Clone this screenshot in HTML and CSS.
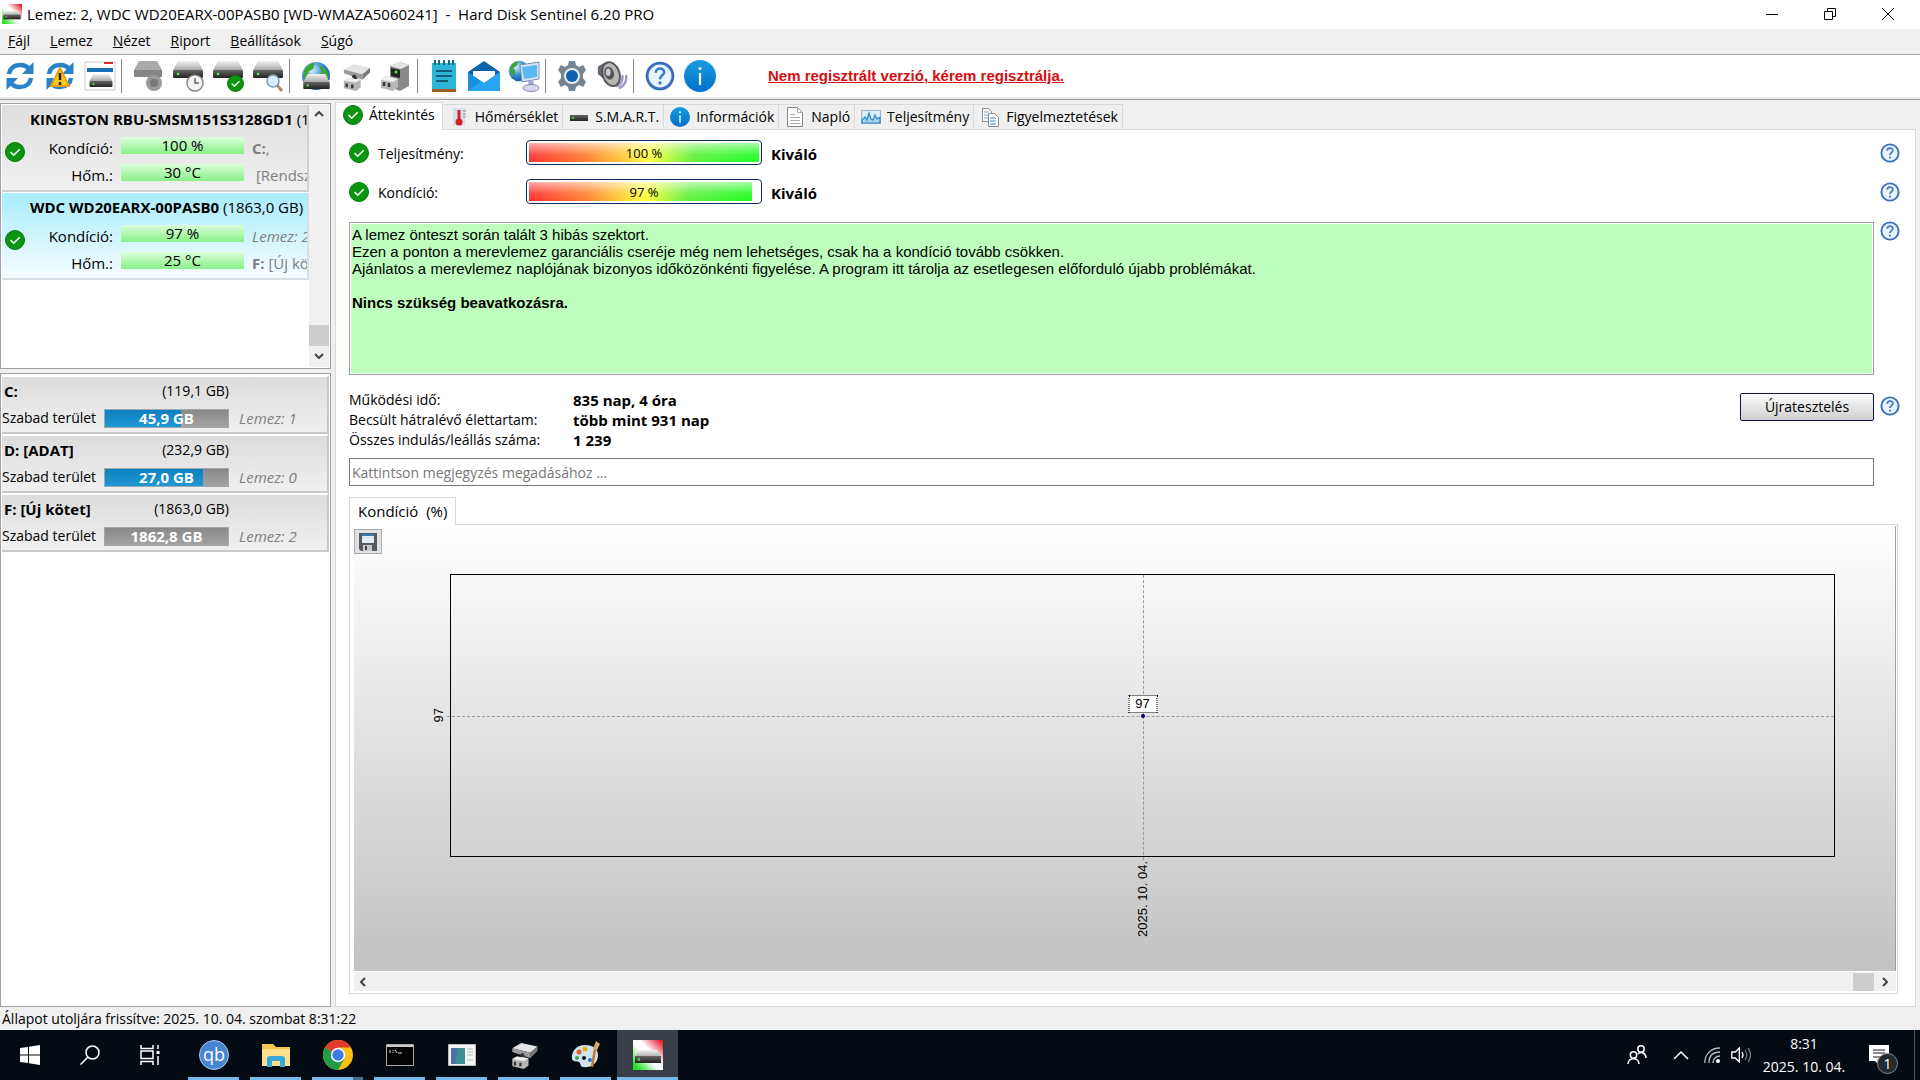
FILE: index.html
```html
<!DOCTYPE html>
<html lang="hu">
<head>
    <meta charset="UTF-8">
    <meta name="viewport" content="width=device-width, initial-scale=1.0">
    <title>Hard Disk Sentinel 6.20 PRO</title>
    <link rel="stylesheet" href="styles.css">
</head>
<body>

    <!-- Shared icons -->
    <svg class="sprite" aria-hidden="true">
        <defs>
            <linearGradient id="metal" x1="0" y1="0" x2="0" y2="1"><stop offset="0" stop-color="#f2f2f2"/><stop offset="1" stop-color="#a8a8a8"/></linearGradient>
            <linearGradient id="dark" x1="0" y1="0" x2="0" y2="1"><stop offset="0" stop-color="#666"/><stop offset="1" stop-color="#222"/></linearGradient>
            <linearGradient id="blue" x1="0" y1="0" x2="0" y2="1"><stop offset="0" stop-color="#189ce0"/><stop offset="1" stop-color="#0070c8"/></linearGradient>
            <linearGradient id="flag" x1="0" y1="1" x2="1" y2="0"><stop offset="0.1" stop-color="#28e028"/><stop offset="0.45" stop-color="#fff"/><stop offset="0.6" stop-color="#fff"/><stop offset="0.95" stop-color="#e82030"/></linearGradient>
            <radialGradient id="globe" cx="0.35" cy="0.3" r="0.8"><stop offset="0" stop-color="#d8f0ff"/><stop offset="0.5" stop-color="#3a8fd8"/><stop offset="1" stop-color="#0c4a98"/></radialGradient>
        </defs>
        <symbol id="i-check" viewBox="0 0 20 20">
            <circle cx="10" cy="10" r="9.5" fill="#0a9410" stroke="#087a0c"/>
            <path d="M5.5 10l3.2 3.2 6-6" fill="none" stroke="#fff" stroke-width="1.6"/>
        </symbol>
        <symbol id="i-help" viewBox="0 0 20 20">
            <circle cx="10" cy="10" r="8.6" fill="#e8f4ff" stroke="#3c6eb8" stroke-width="1.9"/>
            <path d="M7.2 7.8c0-3.6 5.6-3.6 5.6-.3 0 2.2-2.8 2.2-2.8 4.6" fill="none" stroke="#3c78c8" stroke-width="1.7"/>
            <circle cx="10" cy="14.6" r="1.1" fill="#3c78c8"/>
        </symbol>
        <symbol id="i-info" viewBox="0 0 32 32">
            <circle cx="16" cy="16" r="16" fill="url(#blue)"/>
            <path d="M16 13v12" stroke="#fff" stroke-width="2.2"/><circle cx="16" cy="8.5" r="1.6" fill="#fff"/>
        </symbol>
        <symbol id="i-drive" viewBox="0 0 30 17">
            <path d="M5 0h20l5 9H0z" fill="url(#metal)"/>
            <rect y="9" width="30" height="8" rx="1" fill="url(#dark)"/>
            <circle cx="5" cy="13" r="1.3" fill="#4df04d"/>
        </symbol>
        <symbol id="i-refresh" viewBox="0 0 30 30">
            <path d="M4 13C5 7 9 4 15 4c4 0 7 1 9 4M26 17c-1 6-5 9-11 9-4 0-7-1-9-4" fill="none" stroke="#2a82c8" stroke-width="4.5"/>
            <path d="M28.5 1v12H17zM1.5 29V17H13z" fill="#2a82c8"/>
        </symbol>
        <symbol id="i-logo" viewBox="0 0 30 30">
            <path d="M0 0h30v30H0z" fill="url(#flag)"/>
            <path d="M6 10h18l4 7H2z" fill="url(#metal)"/>
            <path d="M2 16h26v7H2z" fill="url(#dark)"/><circle cx="6" cy="19.5" r="1.2" fill="#4df04d"/>
        </symbol>
        <symbol id="i-box" viewBox="0 0 30 30">
            <path d="M2 7l10-6 18 4-8 7z" fill="#e4e4e4"/><path d="M2 7l20 5v6L2 11z" fill="#9a9a9a"/><path d="M22 12l8-7v5l-8 8z" fill="#777"/>
            <path d="M12 13l3 5" stroke="#333" stroke-width="4"/>
            <path d="M2 19l5-3 13 2v8l-5 4-13-3z" fill="#b4b4b4"/><path d="M2 19l5-3 13 2-5 3z" fill="#eee"/>
            <path d="M5 22v4M11 23v4" stroke="#333" stroke-width="2.5"/>
        </symbol>
        <symbol id="i-world" viewBox="0 0 30 30">
            <circle cx="15" cy="15" r="14" fill="url(#globe)"/>
            <path d="M5 6c4-4 7-4 9-4l-2 6-5 3 3 4-2 7C2 18 1 12 5 6zM18 4l7 4 3 7-3 6-6-5 1-6z" fill="#3aa63a"/>
        </symbol>
        <symbol id="i-speaker" viewBox="0 0 34 32">
            <path d="M24 29c6-2 9-8 8-14M21 27c5-2 8-6 7-12" fill="none" stroke="#9a9ac4" stroke-width="2.5"/>
            <path d="M2 6l7-4 6 3v12l-7 2-6-5z" fill="#686474"/>
            <ellipse cx="16" cy="14" rx="10" ry="14" fill="#555" transform="rotate(-18 16 14)"/>
            <ellipse cx="16" cy="14" rx="8" ry="12" fill="#b8b8b8" transform="rotate(-18 16 14)"/>
            <ellipse cx="14" cy="13" rx="5" ry="7" fill="#555" transform="rotate(-18 14 13)"/><ellipse cx="13" cy="12" rx="2.500" ry="4" fill="#c8c8d8"/>
        </symbol>
    </svg>

    <header class="titlebar">
        <svg class="titlebar-logo"><use href="#i-logo"/></svg>
        <h1 class="titlebar-text">Lemez: 2, WDC WD20EARX-00PASB0 [WD-WMAZA5060241] &nbsp;-&nbsp; Hard Disk Sentinel 6.20 PRO</h1>
        <div class="window-buttons">
            <button type="button" aria-label="Kis méret"><svg viewBox="0 0 12 12"><path d="M0 6.500h12"/></svg></button>
            <button type="button" aria-label="Előző méret"><svg viewBox="0 0 12 12"><path d="M.5 3.500h8v8h-8zM3.500 3V.5h8v8H9"/></svg></button>
            <button type="button" aria-label="Bezárás"><svg viewBox="0 0 12 12"><path d="M0 0l12 12M12 0L0 12"/></svg></button>
        </div>
    </header>

    <nav class="menubar">
        <button type="button"><u>F</u>ájl</button>
        <button type="button"><u>L</u>emez</button>
        <button type="button"><u>N</u>ézet</button>
        <button type="button"><u>R</u>iport</button>
        <button type="button"><u>B</u>eállítások</button>
        <button type="button"><u>S</u>úgó</button>
    </nav>

    <div class="toolbar">
        <div class="tool-group">
            <button type="button" aria-label="Frissítés"><svg viewBox="0 0 32 32"><use href="#i-refresh" x="1" y="1" width="30" height="30"/></svg></button>
            <button type="button" aria-label="Problémák frissítése"><svg viewBox="0 0 32 32"><use href="#i-refresh" x="1" y="1" width="30" height="30"/><path d="M16 8l9 18H7z" fill="#fdc820" stroke="#e8a010" stroke-linejoin="round" stroke-width="2"/><path d="M16 13v7M16 22v3" stroke="#222" stroke-width="2.500"/></svg></button>
            <button type="button" aria-label="Lemezek"><svg viewBox="0 0 32 32"><path d="M1 2h30v28H1z" fill="#fff" stroke="#ccc"/><path d="M3 10h26" stroke="#1670b8" stroke-width="4"/><path d="M20 3h9" stroke="#d03030" stroke-width="2"/><use href="#i-drive" x="5" y="14" width="24" height="13"/></svg></button>
        </div>
        <div class="tool-group">
            <button type="button" disabled aria-label="Zajszint"><svg viewBox="0 0 32 32"><path d="M7 1h18l5 9H2z" fill="#aaa"/><path d="M2 10h28v7H2z" fill="#858585"/><circle cx="22" cy="23" r="8" fill="#999"/><circle cx="22" cy="23" r="4" fill="#777"/></svg></button>
            <button type="button" aria-label="Ütemezés"><svg viewBox="0 0 32 32"><use href="#i-drive" x="1" y="1" width="30" height="17"/><circle cx="23" cy="23" r="8" fill="#f4f4f4" stroke="#888" stroke-width="1.500"/><path d="M23 18v5h4" fill="none" stroke="#666" stroke-width="1.500"/></svg></button>
            <button type="button" aria-label="Rövid teszt"><svg viewBox="0 0 32 32"><use href="#i-drive" x="1" y="1" width="30" height="17"/><use href="#i-check" x="15" y="15" width="17" height="17"/></svg></button>
            <button type="button" aria-label="Felülettesztelés"><svg viewBox="0 0 32 32"><use href="#i-drive" x="1" y="1" width="30" height="17"/><path d="M25 25l5 6" stroke="#b09060" stroke-width="3"/><circle cx="21" cy="21" r="6" fill="#dceefc" stroke="#8098b8" stroke-width="1.500"/></svg></button>
        </div>
        <div class="tool-group">
            <button type="button" aria-label="Hálózati lemez"><svg viewBox="0 0 32 32"><use href="#i-world" x="1" y="1" width="30" height="30"/><use href="#i-drive" x="3" y="14" width="27" height="15"/></svg></button>
            <button type="button" aria-label="Lemez leválasztása"><svg viewBox="0 0 32 32"><use href="#i-box" x="1" y="3" width="30" height="28"/></svg></button>
            <button type="button" aria-label="Lemez csatlakoztatása"><svg viewBox="0 0 32 32"><path d="M10 6l10-4 9 3v21l-9 5-10-4z" fill="#8a8a8a"/><path d="M10 6l10-4 9 3-8 4z" fill="#e4e4e4"/><path d="M11 8l9 2v8l-9-2z" fill="#222"/><circle cx="16" cy="12" r="1.500" fill="#4df04d"/><path d="M1 20l5-4 12 3v8l-5 4-12-3z" fill="#b8b8b8"/><path d="M1 20l5-4 12 3-5 3z" fill="#eee"/><path d="M4 22v4M9 23v4" stroke="#333" stroke-width="2.500"/></svg></button>
        </div>
        <div class="tool-group">
            <button type="button" aria-label="Riport"><svg viewBox="0 0 32 32"><path d="M4 3h24v26H4z" fill="#2eb4d8"/><path d="M4 29h24v3H4z" fill="#a05c28"/><path d="M7 0v5M11 0v5M16 0v5M21 0v5M25 0v5" stroke="#176a88" stroke-width="2"/><path d="M8 11h16M8 16h16M8 21h12" stroke="#14607c" stroke-width="1.800"/></svg></button>
            <button type="button" aria-label="Riport küldése"><svg viewBox="0 0 32 32"><path d="M0 12L16 1l16 11v19H0z" fill="#0a62a8"/><path d="M5 11h22v12H5z" fill="#fff"/><path d="M0 12l16 11 16-11v19H0z" fill="#1a90e0"/><path d="M0 31l13-10 3 2 16-11v19z" fill="#28a4f0"/></svg></button>
            <button type="button" aria-label="Hálózat"><svg viewBox="0 0 32 32"><use href="#i-world" x="0" y="0" width="22" height="22"/><path d="M12 5l19-3v17l-17 3z" fill="#d8e4f4" stroke="#7890b8"/><path d="M14 7l15-2v12l-13 2z" fill="#58b8f4"/><path d="M20 21l5-1 1 6h-5z" fill="#a8a8d0"/><ellipse cx="23" cy="28" rx="8" ry="3.500" fill="#d8d8ec" stroke="#8888b0"/></svg></button>
        </div>
        <div class="tool-group">
            <button type="button" aria-label="Beállítások"><svg viewBox="0 0 32 32"><path d="M13 1h6l1 4 3 2 4-2 3 5-3 4v4l3 4-3 5-4-2-3 2-1 4h-6l-1-4-3-2-4 2-3-5 3-4v-4l-3-4 3-5 4 2 3-2z" fill="#748490"/><circle cx="16" cy="16" r="8" fill="#e8eef4"/><circle cx="16" cy="16" r="6" fill="#0c62b0"/></svg></button>
            <button type="button" aria-label="Hangok"><svg><use href="#i-speaker"/></svg></button>
        </div>
        <div class="tool-group">
            <button type="button" aria-label="Súgó"><svg viewBox="0 0 32 32"><use href="#i-help" x="1" y="1" width="30" height="30"/></svg></button>
            <button type="button" aria-label="Névjegy"><svg><use href="#i-info"/></svg></button>
        </div>
        <a class="register-link" href="#register">Nem regisztrált verzió, kérem regisztrálja.</a>
    </div>

    <div class="workspace">
        <aside class="sidebar">
            <section class="panel disks">
                <ul class="disk-list">
                    <li class="disk">
                        <h2 class="disk-name"><b>KINGSTON RBU-SMSM151S3128GD1</b> (119,1 GB)</h2>
                        <svg class="status-icon"><use href="#i-check"/></svg>
                        <span class="disk-label">Kondíció:</span>
                        <span class="disk-bar">100 %</span>
                        <span class="disk-extra"><b>C:</b>,</span>
                        <span class="disk-label">Hőm.:</span>
                        <span class="disk-bar">30 °C</span>
                        <span class="disk-extra">&nbsp;[Rendszer]</span>
                    </li>
                    <li class="disk selected">
                        <h2 class="disk-name"><b>WDC WD20EARX-00PASB0</b> (1863,0 GB)</h2>
                        <svg class="status-icon"><use href="#i-check"/></svg>
                        <span class="disk-label">Kondíció:</span>
                        <span class="disk-bar">97 %</span>
                        <span class="disk-extra"><i>Lemez: 2</i></span>
                        <span class="disk-label">Hőm.:</span>
                        <span class="disk-bar">25 °C</span>
                        <span class="disk-extra"><b>F:</b> [Új kötet]</span>
                    </li>
                </ul>
                <div class="scroll-v">
                    <svg viewBox="0 0 10 6"><path d="M1 5l4-4 4 4"/></svg>
                    <span class="thumb"></span>
                    <svg viewBox="0 0 10 6"><path d="M1 1l4 4 4-4"/></svg>
                </div>
            </section>

            <section class="panel volumes">
                <ul>
                    <li class="volume">
                        <b class="volume-name">C:</b>
                        <span class="volume-size">(119,1 GB)</span>
                        <span class="volume-label">Szabad terület</span>
                        <span class="volume-bar"><span class="volume-used" style="width: 62%"></span><b>45,9 GB</b></span>
                        <i>Lemez: 1</i>
                    </li>
                    <li class="volume">
                        <b class="volume-name">D: [ADAT]</b>
                        <span class="volume-size">(232,9 GB)</span>
                        <span class="volume-label">Szabad terület</span>
                        <span class="volume-bar"><span class="volume-used" style="width: 80%"></span><b>27,0 GB</b></span>
                        <i>Lemez: 0</i>
                    </li>
                    <li class="volume">
                        <b class="volume-name">F: [Új kötet]</b>
                        <span class="volume-size">(1863,0 GB)</span>
                        <span class="volume-label">Szabad terület</span>
                        <span class="volume-bar"><span class="volume-used" style="width: 0%"></span><b>1862,8 GB</b></span>
                        <i>Lemez: 2</i>
                    </li>
                </ul>
            </section>
        </aside>

        <main class="content">
            <div class="tabs" role="tablist">
                <button type="button" role="tab" class="tab active" aria-selected="true"><svg><use href="#i-check"/></svg>Áttekintés</button>
                <button type="button" role="tab" class="tab"><svg viewBox="0 0 20 20"><path d="M4 1h12v18H4z" fill="#d4e0f0"/><path d="M14 4h3M14 7h3M14 10h3" stroke="#889"/><path d="M10 3v12" stroke="#d42020" stroke-width="3"/><circle cx="10" cy="15" r="3.500" fill="#d42020"/></svg>Hőmérséklet</button>
                <button type="button" role="tab" class="tab"><svg viewBox="0 0 20 20"><path d="M1 8h18v6H1z" fill="url(#dark)"/><circle cx="4" cy="11" r="1" fill="#4df04d"/></svg>S.M.A.R.T.</button>
                <button type="button" role="tab" class="tab"><svg><use href="#i-info"/></svg>Információk</button>
                <button type="button" role="tab" class="tab"><svg viewBox="0 0 20 20"><path d="M2.500 .5h10l5 5v14h-15z" fill="#fff" stroke="#888"/><path d="M12.500 .5v5h5M5 7.500h5M5 10.500h10M5 13.500h10M5 16.500h10" fill="none" stroke="#aaa"/></svg>Napló</button>
                <button type="button" role="tab" class="tab"><svg viewBox="0 0 20 20"><path d="M.5 3.500h19v13H.5z" fill="#dceefa" stroke="#a0b4c8"/><path d="M1 13l3-3 2 3 2-7 2 6 2 1 2-5 2 4 3-2v6H1z" fill="#a8d4f4" stroke="#2a88c8" stroke-width="1.200"/></svg>Teljesítmény</button>
                <button type="button" role="tab" class="tab"><svg viewBox="0 0 20 20"><path d="M2.500 1.500h6l3 3v10h-9z" fill="#fff" stroke="#888"/><path d="M4 5h5M4 8h5M4 11h5" stroke="#68a0cc"/><path d="M8.500 6.500h6l4 4v9h-10z" fill="#fff" stroke="#888"/><path d="M10 11h6M10 14h6M10 17h6" stroke="#3890d0"/></svg>Figyelmeztetések</button>
            </div>

            <div class="tab-page">
                <div class="overview">
                    <div class="meter-row">
                        <svg class="status-icon"><use href="#i-check"/></svg>
                        <span class="meter-label">Teljesítmény:</span>
                        <div class="meter"><span class="meter-fill" style="width: 100%"></span><span class="meter-text">100 %</span></div>
                        <b>Kiváló</b>
                    </div>
                    <button type="button" class="help" aria-label="Súgó: teljesítmény"><svg><use href="#i-help"/></svg></button>

                    <div class="meter-row">
                        <svg class="status-icon"><use href="#i-check"/></svg>
                        <span class="meter-label">Kondíció:</span>
                        <div class="meter"><span class="meter-fill" style="width: 97%"></span><span class="meter-text">97 %</span></div>
                        <b>Kiváló</b>
                    </div>
                    <button type="button" class="help" aria-label="Súgó: kondíció"><svg><use href="#i-help"/></svg></button>

                    <div class="health-text">
                        <p>A lemez önteszt során talált 3 hibás szektort.</p>
                        <p>Ezen a ponton a merevlemez garanciális cseréje még nem lehetséges, csak ha a kondíció tovább csökken.</p>
                        <p>Ajánlatos a merevlemez naplójának bizonyos időközönkénti figyelése. A program itt tárolja az esetlegesen előforduló újabb problémákat.</p>
                        <p class="verdict">Nincs szükség beavatkozásra.</p>
                    </div>
                    <button type="button" class="help" aria-label="Súgó: szöveges leírás"><svg><use href="#i-help"/></svg></button>

                    <div class="facts-row">
                        <dl class="facts">
                            <dt>Működési idő:</dt><dd>835 nap, 4 óra</dd>
                            <dt>Becsült hátralévő élettartam:</dt><dd>több mint 931 nap</dd>
                            <dt>Összes indulás/leállás száma:</dt><dd>1 239</dd>
                        </dl>
                        <button type="button" class="retest">Újratesztelés</button>
                    </div>
                    <button type="button" class="help" aria-label="Súgó: újratesztelés"><svg><use href="#i-help"/></svg></button>

                    <input class="comment" type="text" aria-label="Megjegyzés" placeholder="Kattintson megjegyzés megadásához ...">
                </div>

                <div class="chart-tabs" role="tablist">
                    <button type="button" role="tab" class="chart-tab" aria-selected="true">Kondíció &nbsp;(%)</button>
                </div>
                <section class="chart-page">
                    <div class="chart">
                        <button type="button" class="save" aria-label="Mentés"><svg viewBox="0 0 18 18"><path d="M0 0h18v18H2l-2-2z" fill="#555b62"/><path d="M3 1h12v9H3z" fill="#dfe8ee"/><path d="M3 1h12v2H3z" fill="#3c7cb4"/><path d="M4 12h9v6H4z" fill="#c8c8c8"/><path d="M6 13h2v4H6z" fill="#444"/></svg></button>
                        <span class="axis-y">97</span>
                        <div class="plot">
                            <span class="point"></span>
                            <span class="point-label">97</span>
                        </div>
                        <span class="axis-x">2025. 10. 04.</span>
                    </div>
                    <div class="scroll-h">
                        <svg viewBox="0 0 6 10"><path d="M5 1L1 5l4 4"/></svg>
                        <span class="thumb"></span>
                        <svg viewBox="0 0 6 10"><path d="M1 1l4 4-4 4"/></svg>
                    </div>
                </section>
            </div>
        </main>
    </div>

    <footer class="statusbar">Állapot utoljára frissítve: 2025. 10. 04. szombat 8:31:22</footer>

    <div class="taskbar">
        <div class="task-system">
            <button type="button" aria-label="Start"><svg viewBox="0 0 20 20"><path d="M0 3l8-1v7.500H0zM9 1.800L20 0v9.500H9zM0 10.500h8V18l-8-1zM9 10.500h11V20L9 18.200z" fill="#fff"/></svg></button>
            <button type="button" aria-label="Keresés"><svg viewBox="0 0 20 20"><circle cx="12.500" cy="7.500" r="6.500" fill="none" stroke="#fff" stroke-width="1.500"/><path d="M8 12l-7.500 7.500" stroke="#fff" stroke-width="1.500"/></svg></button>
            <button type="button" aria-label="Feladatnézet"><svg viewBox="0 0 20 20"><path d="M1 0v3.500h12V0M1 20v-3.500h12V20M1 6h12v7.500H1zM18 0v4M18 11v9" fill="none" stroke="#fff" stroke-width="1.500"/><path d="M16.500 6h3v3h-3z" fill="#fff"/></svg></button>
        </div>
        <div class="task-apps">
            <button type="button" class="app" aria-label="qBittorrent"><svg viewBox="0 0 30 30"><circle cx="15" cy="15" r="14.500" fill="#4684d4" stroke="#a8ccf4"/><text class="qb" x="15" y="21" text-anchor="middle">qb</text></svg></button>
            <button type="button" class="app" aria-label="Fájlkezelő"><svg viewBox="0 0 30 30"><path d="M1 4h11l3 3h14v19H1z" fill="#f4c64c"/><path d="M1 9h28v17H1z" fill="#fde08a"/><path d="M6 27v-8q0-3 3-3h12q3 0 3 3v8h-5v-6h-8v6z" fill="#38a8d8"/></svg></button>
            <button type="button" class="app multi" aria-label="Chrome"><svg viewBox="0 0 30 30"><circle cx="15" cy="15" r="15" fill="#fbc116"/><path d="M15 15L2 7.500A15 15 0 0 1 28 7.500H15z" fill="#e33b2e"/><path d="M2 7.500A15 15 0 0 0 15 30l6.500-11.300L15 15z" fill="#229a48"/><circle cx="15" cy="15" r="7.200" fill="#fff"/><circle cx="15" cy="15" r="5.700" fill="#3b7de8"/></svg></button>
            <button type="button" class="app" aria-label="Parancssor"><svg viewBox="0 0 30 30"><path d="M1.500 4.500h27v21h-27z" fill="#050505" stroke="#aaa"/><path d="M2 5h26v2H2z" fill="#ccc"/><path d="M5 10v3M8 10v1M8 12v1M10 10l2 3M13 13h4" stroke="#ddd" fill="none"/></svg></button>
            <button type="button" class="app" aria-label="Alkalmazás"><svg viewBox="0 0 30 30"><path d="M1.500 4.500h27v21h-27z" fill="#f4f4f4" stroke="#bbb"/><path d="M4 8h14v16H4z" fill="#3c8f90"/><path d="M4 8h7L8 24H4z" fill="#4c70a8"/><path d="M20 9h6M20 12h6M20 15h6M20 20h6" stroke="#b0b8c0"/></svg></button>
            <button type="button" class="app" aria-label="Lemezeszköz"><svg viewBox="0 0 30 30"><use href="#i-box" x="1" y="2" width="28" height="27"/></svg></button>
            <button type="button" class="app" aria-label="Paint"><svg viewBox="0 0 30 30"><path d="M14 5c8 0 13 4 13 10 0 8-6 13-15 12-3 0-2-4-4-5s-6 0-7-3C0 11 6 5 14 5z" fill="#cfe4f0"/><circle cx="8" cy="12" r="2.500" fill="#e06030"/><circle cx="14" cy="9" r="2.500" fill="#e8b020"/><circle cx="6" cy="18" r="2" fill="#40a840"/><circle cx="13" cy="18" r="2" fill="#101820"/><circle cx="19" cy="20" r="2" fill="#3070d0"/><path d="M21 27l3-18" stroke="#c87828" stroke-width="2.500"/><path d="M22 9l3-8 4 3-3 6z" fill="#d8a868"/></svg></button>
            <button type="button" class="app active" aria-label="Hard Disk Sentinel"><svg><use href="#i-logo"/></svg></button>
        </div>
        <div class="tray">
            <svg class="tray-people" viewBox="0 0 20 20"><g fill="none" stroke="#fff" stroke-width="1.500"><circle cx="6.500" cy="10" r="3.200"/><circle cx="14" cy="4" r="3.200"/><path d="M1 19c0-7 11-7 11 0M11 9c3-3 8-1 8 4"/></g></svg>
            <svg class="tray-up" viewBox="0 0 16 16"><path d="M1 12l7-7 7 7" fill="none" stroke="#fff" stroke-width="1.500"/></svg>
            <svg class="tray-wifi" viewBox="0 0 16 16"><path d="M.8 16C.8 7 7 1 16 1M5 16C5 9 9 5 16 5M9 16c0-4 3-7 7-7" fill="none" stroke="#b8bcc0" stroke-width="1.300"/><circle cx="14" cy="14" r="2" fill="#fff"/></svg>
            <svg class="tray-sound" viewBox="0 0 20 16"><path d="M.8 5h3.500l4-4v14l-4-4H.8z" fill="none" stroke="#fff" stroke-width="1.300"/><path d="M11 5q2 3 0 6" fill="none" stroke="#fff" stroke-width="1.300"/><path d="M14 3q3.500 5 0 10M17 1q5 7 0 14" fill="none" stroke="#777" stroke-width="1.300"/></svg>
            <div class="clock"><time datetime="08:31">8:31</time><time datetime="2025-10-04">2025. 10. 04.</time></div>
            <button type="button" class="notify" aria-label="Értesítések"><svg viewBox="0 0 20 20"><path d="M0 0h20v16h-6l-4 4-4-4H0z" fill="#fff"/><path d="M4 5h12M4 8h12M4 12h8" stroke="#101820"/></svg><span class="badge">1</span></button>
        </div>
    </div>

</body>
</html>
```
FILE: styles.css
```css
/* General Page Styling */
* {
    box-sizing: border-box;
}

body {
    margin: 0;
    min-height: 100vh;
    display: flex;
    flex-direction: column;
    background: #f0f0f0;
    font: 14px/20px "Open Sans", "Noto Sans", sans-serif;
    color: #000;
}

h1, h2, p, ul, dl, dd {
    margin: 0;
    padding: 0;
    font-size: inherit;
    font-weight: normal;
    list-style: none;
}

button {
    padding: 0;
    border: 0;
    background: none;
    color: inherit;
    font: inherit;
}

svg { display: block; }

.sprite {
    position: absolute;
    width: 0;
    height: 0;
}

/* Title bar */
.titlebar {
    display: flex;
    align-items: center;
    height: 29px;
    padding: 0 3px 2px 2px;
    background: #fff;
}

.titlebar-logo { width: 20px; height: 20px; }

.titlebar-text { margin-left: 5px; font-size: 15px; }

.window-buttons {
    display: flex;
    margin-left: auto;
}

.window-buttons button {
    display: grid;
    place-items: center;
    width: 58px;
    height: 27px;
}

.window-buttons svg {
    width: 12px;
    height: 12px;
    fill: none;
    stroke: #000;
}

/* Menu */
.menubar {
    display: flex;
    gap: 20px;
    height: 25px;
    padding: 0 0 2px 8px;
}

/* Toolbar */
.toolbar {
    display: flex;
    align-items: center;
    height: 46px;
    padding-bottom: 2px;
    border-top: 1px solid #a0a0a0;
    border-bottom: 1px solid #a0a0a0;
    background: #fff;
    box-shadow: inset 0 -2px #e8e8e8;
}

.tool-group {
    display: flex;
    gap: 8px;
    align-items: center;
    height: 34px;
    padding: 0 5px 0 10px;
    border-right: 1px solid #888;
}

.tool-group:first-child { padding-left: 4px; }

.tool-group:nth-last-child(2) { border: 0; }

.tool-group svg { width: 32px; height: 32px; }

.register-link {
    margin-left: 47px;
    color: #d80c10;
    font: bold 15px/20px "Liberation Sans", Arial, sans-serif;
}

/* Workspace */
.workspace {
    display: flex;
    flex: 1;
    gap: 4px;
    padding: 2px 4px 0 0;
}

.sidebar {
    display: flex;
    flex-direction: column;
    gap: 4px;
    width: 331px;
    padding-top: 1px;
}

.panel {
    border: 1px solid #a0a0a0;
    background: #fff;
    padding: 1px;
}

.disks {
    display: flex;
    height: 266px;
    font-size: 15px;
}

.disk-list {
    flex: 1;
    min-width: 0;
    overflow: hidden;
}

.disk {
    display: grid;
    grid-template-columns: 20px 80px 123px 1fr;
    grid-template-rows: 28px 29px 25px;
    column-gap: 8px;
    align-items: center;
    height: 87px;
    padding-left: 3px;
    border: solid #d0d0d0;
    border-width: 0 2px 2px 0;
    margin-bottom: 1px;
    background: linear-gradient(#dedede, #f0f0f0);
    white-space: nowrap;
    overflow: hidden;
}

.disk.selected {
    border-color: #d8dfe4;
    background: linear-gradient(#a8ecfc, #f6fdff);
}

.disk-name {
    grid-column: 1 / -1;
    padding-left: 25px;
}

.status-icon { width: 20px; height: 20px; }

.disk .status-icon {
    grid-row: 2 / 4;
    grid-column: 1;
    margin-bottom: 16px;
}

.disk-label {
    grid-column: 2;
    text-align: right;
}

.disk-bar {
    height: 17px;
    margin-bottom: 4px;
    background: linear-gradient(#dcffdc, #88f088);
    line-height: 17px;
    text-align: center;
}

.disk-extra { color: #808080; }

.scroll-v {
    display: flex;
    flex-direction: column;
    align-items: center;
    width: 20px;
    padding: 6px 0 8px;
    background: #f0f0f0;
}

.scroll-v svg, .scroll-h svg {
    fill: none;
    stroke: #444;
    stroke-width: 2;
}

.scroll-v svg { width: 10px; height: 6px; }

.scroll-v .thumb {
    width: 20px;
    height: 21px;
    margin: auto 0 7px;
    background: #cdcdcd;
}

.volumes { flex: 1; }

.volume {
    display: grid;
    grid-template-columns: 102px 125px 1fr;
    grid-template-rows: 27px 28px;
    align-items: center;
    height: 59px;
    border: solid #c8c8c8;
    border-width: 0 2px 2px 0;
    border-top: 2px solid #fff;
    background: linear-gradient(#dcdcdc, #f0f0f0);
    white-space: nowrap;
}

.volume-name {
    padding-left: 2px;
    font-size: 15px;
}

.volume-size {
    grid-column: 2;
    text-align: right;
}

.volume-label { grid-area: 2 / 1; }

.volume-bar {
    grid-area: 2 / 2;
    position: relative;
    height: 19px;
    background: linear-gradient(#888, #a4a4a4);
    border: 1px solid #a0a8ac;
    color: #fff;
    font-size: 15px;
    line-height: 17px;
    text-align: center;
}

/* Used part lies under the caption */
.volume-used {
    position: absolute;
    inset: 0 auto 0 0;
    background: linear-gradient(#0c80c0, #2098d4);
}

.volume-bar b { position: relative; }

.volume i {
    grid-area: 2 / 3;
    padding-left: 10px;
    color: #808080;
    font-size: 15px;
}

/* Tabs */
.content {
    flex: 1;
    min-width: 0;
    display: flex;
    flex-direction: column;
}

.tabs {
    display: flex;
    align-items: flex-end;
}

.tab {
    display: flex;
    align-items: center;
    gap: 6px;
    height: 25px;
    padding: 0 4px 0 6px;
    border: 1px solid #d9d9d9;
    border-width: 1px 1px 0 0;
    white-space: nowrap;
}

.tab svg { width: 20px; height: 20px; }

.tab.active {
    height: 28px;
    margin-bottom: -1px;
    padding: 0 7px 3px;
    border-left-width: 1px;
    background: #fff;
    z-index: 1;
}

.tab-page {
    display: flex;
    flex-direction: column;
    flex: 1;
    padding: 9px 15px 12px 13px;
    border: 1px solid #d9d9d9;
    background: #fff;
}

/* Overview */
.overview {
    display: grid;
    grid-template-columns: 1fr 20px;
    column-gap: 6px;
    align-items: start;
}

.meter-row {
    display: grid;
    grid-template-columns: 20px 139px 236px 1fr;
    column-gap: 9px;
    align-items: center;
    height: 39px;
    padding-bottom: 12px;
}

.meter-row b {
    padding-top: 2px;
    font-size: 15px;
}

.meter-label { padding-top: 2px; }

.meter {
    position: relative;
    height: 25px;
    padding: 2px;
    border: 1px solid #10305c;
    border-radius: 4px;
    background: #fff;
}

.meter-fill {
    display: block;
    height: 19px;
    background:
        linear-gradient(rgba(255, 255, 255, 0.6), rgba(255, 255, 255, 0.1) 60%, rgba(255, 255, 255, 0)),
        linear-gradient(90deg, #ff3030, #ff8030 25%, #ffff40 52%, #60f040 72%, #20ff20);
}

.meter-text {
    position: absolute;
    inset: 0;
    font-size: 13px;
    line-height: 24px;
    text-align: center;
}

.help { padding-top: 4px; }

.help svg { width: 20px; height: 20px; }

.health-text {
    min-height: 153px;
    margin-top: 5px;
    padding: 3px 2px;
    border: 1px solid #a0a0a0;
    box-shadow: inset 0 0 0 1px #fff;
    background: #beffbe;
    font: 15px/17px "Liberation Sans", Arial, sans-serif;
}

.verdict {
    margin-top: 17px;
    font-weight: bold;
}

.facts-row {
    display: flex;
    justify-content: space-between;
    align-items: flex-start;
    padding-top: 15px;
}

.facts-row + .help { padding-top: 21px; }

.facts {
    display: grid;
    grid-template-columns: 224px auto;
}

.facts dd {
    font-size: 15px;
    font-weight: bold;
}

.retest {
    width: 134px;
    height: 28px;
    margin-top: 3px;
    border: 1px solid #101050;
    border-radius: 2px;
    background: linear-gradient(#fcfcfc, #cfcfcf);
}

.comment {
    height: 28px;
    margin-top: 8px;
    padding: 0 2px;
    border: 1px solid #7a7a7a;
    font: inherit;
}

.comment::placeholder { color: #787878; }

/* Chart */
.chart-tabs {
    display: flex;
    margin-top: 11px;
}

.chart-tab {
    height: 28px;
    margin-bottom: -1px;
    padding: 0 8px 2px;
    border: 1px solid #d9d9d9;
    border-bottom: 0;
    background: #fff;
    font-size: 15px;
    z-index: 1;
}

.chart-page {
    display: flex;
    flex-direction: column;
    flex: 1;
    margin-right: 2px;
    padding: 1px 1px 2px 4px;
    border: 1px solid #d9d9d9;
}

.chart {
    flex: 1;
    display: grid;
    grid-template-columns: 74px 22px 1fr 60px;
    grid-template-rows: 48px 1fr 114px;
    border-right: 1px solid #a0a0a0;
    background: linear-gradient(#fff, #c2c2c2);
    font: 13px/16px "Liberation Sans", Arial, sans-serif;
}

.save {
    grid-area: 1 / 1;
    display: grid;
    place-items: center;
    width: 28px;
    height: 25px;
    margin-top: 3px;
    border: 1px solid #adadad;
    background: #e1e1e1;
}

.save svg { width: 18px; height: 18px; }

.plot {
    grid-area: 2 / 3;
    position: relative;
    border: 1px solid #000;
}

/* Crosshair of the single measured day */
.plot::before, .plot::after {
    content: "";
    position: absolute;
}

.plot::before {
    inset: 50% 0 auto -4px;
    border-top: 1px dashed #999;
}

.plot::after {
    inset: 0 auto -4px 50%;
    border-left: 1px dashed #999;
}

.point {
    position: absolute;
    left: 50%;
    top: 50%;
    width: 4px;
    height: 4px;
    border-radius: 50%;
    background: #000060;
    transform: translate(-50%, -50%);
    z-index: 1;
}

.point-label {
    position: absolute;
    left: 50%;
    bottom: 50%;
    width: 29px;
    height: 18px;
    margin-bottom: 3px;
    border: 1px dotted #000;
    background: #fff;
    text-align: center;
    transform: translateX(-50%);
    z-index: 1;
}

.axis-x, .axis-y {
    writing-mode: vertical-rl;
    transform: rotate(180deg);
}

.axis-y {
    grid-area: 2 / 2;
    place-self: center;
}

.axis-x {
    grid-area: 3 / 3;
    justify-self: center;
    align-self: start;
    margin-top: 4px;
}

.scroll-h {
    display: flex;
    align-items: center;
    height: 19px;
    margin-top: 1px;
    padding: 0 8px 0 6px;
    background: #f0f0f0;
}

.scroll-h svg { width: 6px; height: 10px; }

.scroll-h .thumb {
    width: 21px;
    height: 18px;
    margin: 0 8px 0 auto;
    background: #cdcdcd;
}

/* Status bar */
.statusbar {
    height: 23px;
    padding: 2px;
}

/* Taskbar */
.taskbar {
    display: flex;
    height: 50px;
    background: #050b13;
    color: #fff;
}

.task-system, .task-apps { display: flex; }

.task-system button {
    display: grid;
    place-items: center;
    width: 60px;
}

.task-system svg { width: 20px; height: 20px; }

.task-apps {
    gap: 1px;
    margin-left: 3px;
}

.app {
    position: relative;
    display: grid;
    place-items: center;
    width: 61px;
}

.app svg { width: 30px; height: 30px; }

.qb {
    fill: #fff;
    font-size: 18px;
}

.app::after {
    content: "";
    position: absolute;
    inset: auto 5px 0;
    height: 3px;
    background: #76b9ed;
}

.app.multi::after { background: linear-gradient(90deg, #76b9ed 80%, #47708f 80%); }

.app.active { background: #393f46; }

.app.active::after { inset: auto 0 0; }

.tray {
    display: flex;
    align-items: center;
    margin: 0 5px 0 auto;
    padding-right: 21px;
    border-right: 1px solid #555;
}

.tray-people { width: 20px; height: 20px; margin-right: 26px; }
.tray-up { width: 16px; height: 16px; margin-right: 15px; }
.tray-wifi { width: 16px; height: 16px; margin-right: 11px; }
.tray-sound { width: 20px; height: 16px; }

.clock {
    display: grid;
    width: 106px;
    line-height: 23px;
    text-align: center;
}

.notify {
    position: relative;
    width: 36px;
    padding-left: 12px;
}

.notify svg { width: 20px; height: 20px; }

/* Unread count over the notification icon */
.badge {
    position: absolute;
    left: 20px;
    top: 8px;
    width: 21px;
    height: 21px;
    border: 1px solid #888;
    border-radius: 50%;
    background: #26292d;
    line-height: 19px;
    text-align: center;
}
```
